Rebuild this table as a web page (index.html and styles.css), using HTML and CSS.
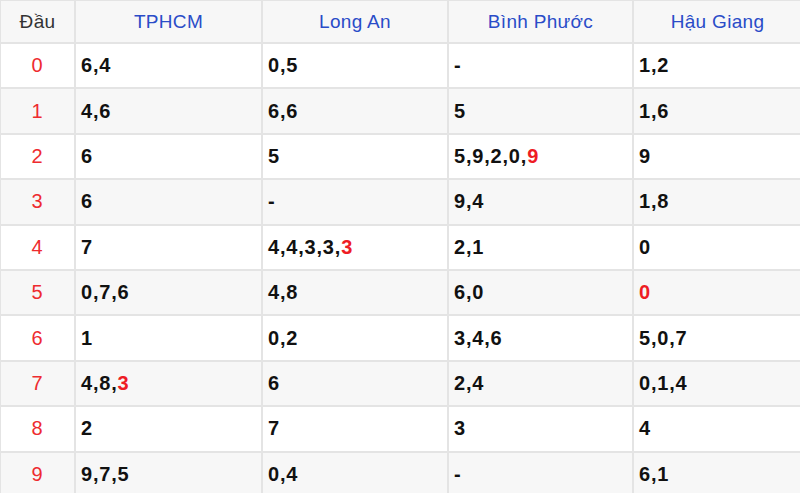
FILE: index.html
```html
<!DOCTYPE html>
<html lang="vi">
<head>
<meta charset="utf-8">
<link rel="stylesheet" href="styles.css">
</head>
<body>
<table class="kq">
  <colgroup>
    <col class="c-dau"><col class="c-1"><col class="c-2"><col class="c-3"><col class="c-4">
  </colgroup>
  <thead>
    <tr><th class="dau-h">Đầu</th><th>TPHCM</th><th>Long An</th><th>Bình Phước</th><th>Hậu Giang</th></tr>
  </thead>
  <tbody>
    <tr><td class="dau">0</td><td>6,4</td><td>0,5</td><td>-</td><td>1,2</td></tr>
    <tr><td class="dau">1</td><td>4,6</td><td>6,6</td><td>5</td><td>1,6</td></tr>
    <tr><td class="dau">2</td><td>6</td><td>5</td><td>5,9,2,0,<span class="hl">9</span></td><td>9</td></tr>
    <tr><td class="dau">3</td><td>6</td><td>-</td><td>9,4</td><td>1,8</td></tr>
    <tr><td class="dau">4</td><td>7</td><td>4,4,3,3,<span class="hl">3</span></td><td>2,1</td><td>0</td></tr>
    <tr><td class="dau">5</td><td>0,7,6</td><td>4,8</td><td>6,0</td><td><span class="hl">0</span></td></tr>
    <tr><td class="dau">6</td><td>1</td><td>0,2</td><td>3,4,6</td><td>5,0,7</td></tr>
    <tr><td class="dau">7</td><td>4,8,<span class="hl">3</span></td><td>6</td><td>2,4</td><td>0,1,4</td></tr>
    <tr><td class="dau">8</td><td>2</td><td>7</td><td>3</td><td>4</td></tr>
    <tr><td class="dau">9</td><td>9,7,5</td><td>0,4</td><td>-</td><td>6,1</td></tr>
  </tbody>
</table>
</body>
</html>
```
FILE: styles.css
```css
html, body {
  margin: 0;
  padding: 0;
  background: #ffffff;
  overflow: hidden;
}
.kq {
  border-collapse: collapse;
  table-layout: fixed;
  width: 802px;
  font-family: "Liberation Sans", Arial, sans-serif;
  margin-top: -1px;
  margin-left: -1px;
}
.c-dau { width: 75px; }
.c-1 { width: 187px; }
.c-2 { width: 186px; }
.c-3 { width: 185px; }
.c-4 { width: 169px; }
.kq th, .kq td {
  border: 2px solid #e4e4e4;
  vertical-align: middle;
  padding: 0 5px;
}
.kq thead tr {
  height: 43px;
  background: #f7f7f7;
}
.kq th {
  font-weight: normal;
  font-size: 19px;
  letter-spacing: 0.3px;
  color: #2a4cc8;
  text-align: center;
}
.kq th.dau-h {
  color: #333333;
}
.kq tbody tr {
  height: 45.4px;
}
.kq tbody tr:nth-child(even) {
  background: #f7f7f7;
}
.kq td {
  font-size: 20px;
  font-weight: bold;
  letter-spacing: 0.8px;
  color: #111111;
  text-align: left;
}
.kq td.dau {
  font-weight: normal;
  color: #ee2b2f;
  text-align: center;
}
.hl {
  color: #ee1c24;
}
```
